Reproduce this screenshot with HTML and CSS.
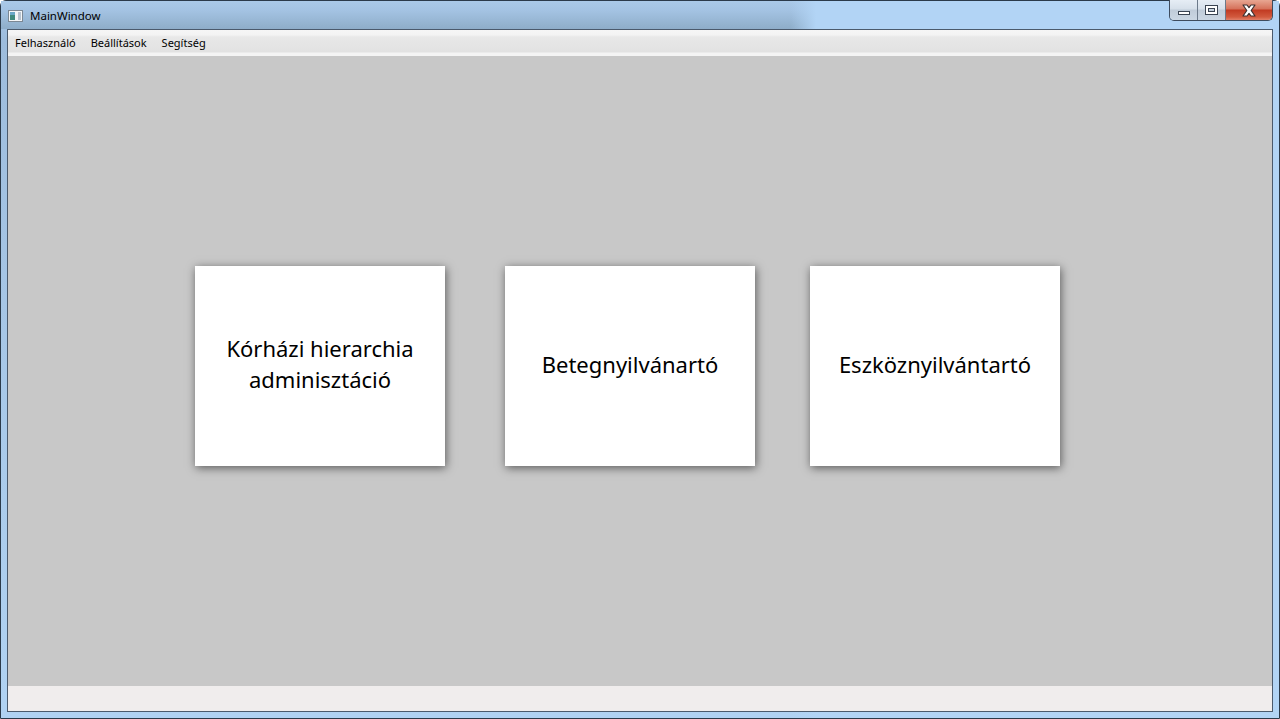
FILE: index.html
```html
<!DOCTYPE html>
<html lang="hu">
<head>
<meta charset="utf-8">
<title>MainWindow</title>
<link rel="stylesheet" href="styles.css">
</head>
<body>
<div class="window">
  <div class="titlebar">
    <svg class="app-icon" width="16" height="14" viewBox="0 0 16 14">
      <rect x="0.5" y="1.5" width="14" height="11" fill="#f4f6f8" stroke="#7c8894"/>
      <rect x="2" y="3" width="5" height="8" fill="#3f8a7e"/>
      <rect x="2" y="3" width="5" height="3" fill="#6aa8c8"/>
      <rect x="10" y="3" width="3" height="8" fill="#b8c4d0"/>
    </svg>
    <span class="title">MainWindow</span>
    <div class="caption-buttons">
      <div class="cbtn cbtn-min"><span class="min-glyph"></span></div>
      <div class="cbtn cbtn-max"><span class="max-glyph"></span></div>
      <div class="cbtn cbtn-close">
        <svg width="18" height="13" viewBox="0 0 18 13">
          <path d="M3 1 L7 1 L9 3.6 L11 1 L15 1 L11.2 6.5 L15 12 L11 12 L9 9.4 L7 12 L3 12 L6.8 6.5 Z" fill="#ffffff" stroke="#3e3030" stroke-width="1.2" stroke-linejoin="round"/>
        </svg>
      </div>
    </div>
  </div>
  <div class="client">
    <div class="menubar">
      <span class="menu-item">Felhasználó</span>
      <span class="menu-item">Beállítások</span>
      <span class="menu-item">Segítség</span>
    </div>
    <div class="content">
      <div class="card card-a"><span>Kórházi hierarchia<br>adminisztáció</span></div>
      <div class="card card-b"><span>Betegnyilvánartó</span></div>
      <div class="card"><span>Eszköznyilvántartó</span></div>
    </div>
    <div class="statusbar"></div>
  </div>
</div>
</body>
</html>
```

FILE: styles.css
```css
html, body {
  margin: 0;
  padding: 0;
  width: 1280px;
  height: 719px;
  overflow: hidden;
}

body {
  font-family: "Noto Sans", "Open Sans", "DejaVu Sans", sans-serif;
}

.window {
  width: 1280px;
  height: 719px;
  box-sizing: border-box;
  border: 1px solid #2b3a4a;
  border-radius: 6px 6px 0 0;
  background:
    linear-gradient(to right, rgba(178,212,245,0) 0, rgba(178,212,245,0) 790px, #b2d4f5 815px),
    linear-gradient(#a9c9ea 0, #9dbcdc 40px, #a6c6e6 300px, #b0d2f2 700px);
  display: flex;
  flex-direction: column;
  padding: 0 6px 6px 6px;
}

.titlebar {
  height: 28px;
  flex: none;
  display: flex;
  align-items: center;
  position: relative;
  margin: 0 -6px;
  padding: 0 6px;
  background:
    linear-gradient(to right, rgba(178,212,245,0) 0, rgba(178,212,245,0) 790px, #b2d4f5 815px),
    linear-gradient(#aac9e8 0, #a3c2e2 10px, #93b2ce 24px, #8eadc9 28px);
}

.app-icon {
  margin-left: 1px;
  margin-top: 2px;
}

.title {
  font-size: 11.5px;
  color: #000;
  margin-left: 6px;
  margin-top: 1px;
}

.caption-buttons {
  position: absolute;
  top: -1px;
  right: 6px;
  height: 20px;
  display: flex;
  border: 1px solid #3e4c5e;
  border-top: none;
  border-radius: 0 0 5px 5px;
  overflow: hidden;
}

.cbtn {
  height: 20px;
  display: flex;
  align-items: center;
  justify-content: center;
}

.cbtn-min, .cbtn-max {
  width: 27px;
  background: linear-gradient(#e6edf5 0, #d6e0ea 45%, #c0ccd9 50%, #cbd7e3 100%);
  border-right: 1px solid #6c7a8a;
}

.cbtn-close {
  width: 46px;
  background: linear-gradient(#e8a692 0, #d5715a 45%, #c13a22 50%, #d25a3e 85%, #e1806a 100%);
}

.min-glyph {
  display: block;
  width: 10px;
  height: 2px;
  background: #fff;
  border: 1px solid #3a4452;
  margin-top: 6px;
}

.max-glyph {
  display: block;
  width: 7px;
  height: 4px;
  border: 2px solid #fff;
  outline: 1px solid #3a4452;
  box-shadow: inset 0 0 0 1px #3a4452;
}

.client {
  flex: 1;
  display: flex;
  flex-direction: column;
  border: 1px solid #4b5a6c;
  background: #c8c8c8;
}

.menubar {
  height: 26px;
  flex: none;
  display: flex;
  align-items: center;
  padding-left: 7px;
  background: linear-gradient(#f6f6f6 0, #f3f3f3 5px, #e8e8e8 7px, #e2e2e2 22px, #f4f4f4 23px, #f4f4f4 26px);
}

.menu-item {
  font-size: 11px;
  color: #000;
  margin-right: 15px;
  padding-bottom: 1px;
}

.content {
  flex: 1;
  display: flex;
  align-items: flex-start;
  padding-top: 210px;
  padding-left: 187px;
  background: #c8c8c8;
}

.card {
  width: 250px;
  height: 200px;
  background: #fff;
  box-shadow: 1px 2px 9px rgba(0,0,0,0.55);
  display: flex;
  align-items: center;
  justify-content: center;
  text-align: center;
  font-size: 22px;
  line-height: 31px;
  color: #000;
  padding-bottom: 4px;
  box-sizing: border-box;
}

.card-a { margin-right: 60px; }
.card-b { margin-right: 55px; }

.statusbar {
  height: 25px;
  flex: none;
  background: #f0eded;
}
```
